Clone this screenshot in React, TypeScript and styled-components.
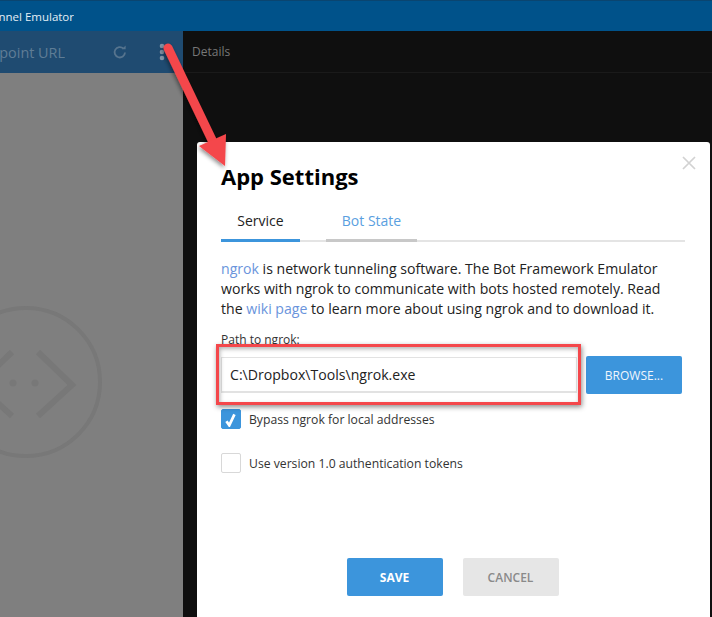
import React from 'react';
import styled, { createGlobalStyle } from 'styled-components';

const GlobalStyle = createGlobalStyle`
  html, body {
    margin: 0;
    padding: 0;
    background: #0f0f0f;
  }
  * {
    box-sizing: border-box;
  }
`;

const FONT = `'Open Sans', 'Noto Sans', 'Liberation Sans', sans-serif`;

const Page = styled.div`
  position: relative;
  width: 712px;
  height: 617px;
  overflow: hidden;
  display: flex;
  flex-direction: column;
  font-family: ${FONT};
  background: #0f0f0f;
`;

const TitleBar = styled.div`
  height: 31px;
  flex-shrink: 0;
  background: #00528a;
  border-top: 1px solid #0a4570;
  display: flex;
`;

const TitleClip = styled.div`
  width: 74px;
  overflow: hidden;
  display: flex;
  justify-content: flex-end;
  align-items: center;
  white-space: nowrap;
  color: #e4eef5;
  font-size: 11.5px;
`;

const Body = styled.div`
  flex: 1;
  display: flex;
  min-height: 0;
`;

const LeftPanel = styled.div`
  width: 183px;
  flex-shrink: 0;
  background: #7f7f7f;
  display: flex;
  flex-direction: column;
`;

const EndpointBar = styled.div`
  height: 42px;
  background: #1f4b71;
  display: flex;
  align-items: center;
`;

const EndpointClip = styled.div`
  width: 65px;
  overflow: hidden;
  display: flex;
  justify-content: flex-end;
  white-space: nowrap;
  color: #5f7d96;
  font-size: 14.4px;
`;

const RefreshIcon = styled.svg`
  width: 16px;
  height: 16px;
  margin-left: 47px;
  color: #56748e;
`;

const DotsIcon = styled.svg`
  width: 6px;
  height: 18px;
  margin-left: 31px;
  color: #8195a8;
`;

const LogoWrap = styled.div`
  margin-top: 229px;
  height: 160px;
  display: flex;
`;

const RightPanel = styled.div`
  flex: 1;
  display: flex;
  flex-direction: column;
`;

const DetailsBar = styled.div`
  height: 42px;
  border-bottom: 1px solid #1a1a1a;
  padding: 0 9px;
  display: flex;
  align-items: center;
  color: #777;
  font-size: 12px;
  background: #0f0f0f;
`;

const Modal = styled.div`
  position: absolute;
  left: 197px;
  top: 142px;
  width: 513px;
  height: 490px;
  background: #fff;
  border-radius: 3px;
  padding: 19px 25px 0 24px;
  display: flex;
  flex-direction: column;
  color: #000;
`;

const CloseIcon = styled.svg`
  position: absolute;
  top: 14px;
  right: 14px;
  width: 14px;
  height: 14px;
  color: #d2d2d2;
`;

const Title = styled.h1`
  margin: 0;
  font-size: 22px;
  line-height: 30px;
  font-weight: 700;
  color: #000;
`;

const TabList = styled.div`
  margin-top: 15px;
  height: 36px;
  display: flex;
  gap: 26px;
  border-bottom: 2px solid #e4e4e4;
`;

const Tab = styled.div<{ $active?: boolean }>`
  width: ${(p) => (p.$active ? 79 : 91)}px;
  height: 36px;
  display: flex;
  justify-content: center;
  padding-top: 5px;
  font-size: 14px;
  line-height: 20px;
  color: ${(p) => (p.$active ? '#222' : '#5a9fe0')};
  border-bottom: 3px solid ${(p) => (p.$active ? '#3c95dc' : '#c8c8c8')};
`;

const Paragraph = styled.p`
  margin: 17px 0 0;
  max-width: 450px;
  font-size: 14.1px;
  line-height: 20px;
  color: #222;
`;

const TextLink = styled.span`
  color: #6a94dc;
`;

const FieldLabel = styled.div`
  margin-top: 13px;
  font-size: 12px;
  line-height: 16px;
  color: #333;
`;

const PathRow = styled.div`
  margin-top: 8px;
  display: flex;
  align-items: center;
  gap: 9px;
`;

const PathInput = styled.div`
  width: 356px;
  height: 36px;
  border: 1px solid #e2e2e2;
  border-bottom-width: 2px;
  padding-left: 8px;
  display: flex;
  align-items: center;
  font-size: 14.1px;
  color: #222;
`;

const BrowseButton = styled.div`
  width: 96px;
  height: 38px;
  background: #3c95dc;
  border-radius: 2px;
  display: flex;
  align-items: center;
  justify-content: center;
  color: #f0f6fc;
  font-size: 12px;
`;

const CheckRow = styled.div<{ $gap: number }>`
  margin-top: ${(p) => p.$gap}px;
  display: flex;
  align-items: center;
  gap: 8px;
  font-size: 12.2px;
  color: #333;
`;

const CheckBox = styled.div<{ $checked?: boolean }>`
  width: 20px;
  height: 20px;
  border-radius: 2px;
  display: flex;
  align-items: center;
  justify-content: center;
  background: ${(p) => (p.$checked ? '#3c95dc' : '#fff')};
  border: 1px solid ${(p) => (p.$checked ? '#3c95dc' : '#d8d8d8')};
`;

const Footer = styled.div`
  margin-top: 85px;
  display: flex;
  justify-content: center;
  gap: 20px;
  padding-right: 1px;
`;

const FooterButton = styled.div<{ $primary?: boolean }>`
  width: 96px;
  height: 38px;
  border-radius: 2px;
  display: flex;
  align-items: center;
  justify-content: center;
  font-size: 12px;
  font-weight: ${(p) => (p.$primary ? 700 : 600)};
  background: ${(p) => (p.$primary ? '#3c95dc' : '#e6e6e6')};
  color: ${(p) => (p.$primary ? '#fff' : '#8a8a8a')};
`;

const Highlight = styled.div`
  position: absolute;
  left: 216px;
  top: 344px;
  width: 365px;
  height: 61px;
  border: 3px solid #f4474b;
  box-shadow: 1px 2px 5px rgba(0, 0, 0, 0.45), inset 1px 2px 4px rgba(0, 0, 0, 0.3);
  pointer-events: none;
`;

const ArrowOverlay = styled.svg`
  position: absolute;
  left: 150px;
  top: 30px;
  width: 90px;
  height: 150px;
  overflow: visible;
  pointer-events: none;
`;

export default function App() {
  return (
    <Page>
      <GlobalStyle />
      <TitleBar>
        <TitleClip>Bot Framework Channel Emulator</TitleClip>
      </TitleBar>
      <Body>
        <LeftPanel>
          <EndpointBar>
            <EndpointClip>Endpoint URL</EndpointClip>
            <RefreshIcon viewBox="0 0 16 16" fill="none" stroke="currentColor" strokeWidth="1.8">
              <path d="M13 8.5a5.2 5.2 0 1 1-1.6-4" />
              <path d="M13.6 1.6v3.6H10" fill="currentColor" stroke="none" />
            </RefreshIcon>
            <DotsIcon viewBox="0 0 6 18" fill="currentColor">
              <circle cx="3" cy="3" r="2.3" />
              <circle cx="3" cy="9" r="2.3" />
              <circle cx="3" cy="15" r="2.3" />
            </DotsIcon>
          </EndpointBar>
          <LogoWrap>
            <svg width="110" height="160" viewBox="0 0 110 160" fill="none" stroke="#787878" strokeWidth="4">
              <circle cx="26" cy="80" r="74" />
              <path d="M38 50l34 33-34 31" strokeWidth="6" />
              <path d="M12 50l-34 33 34 31" strokeWidth="6" />
              <circle cx="13" cy="81" r="3.5" fill="#787878" stroke="none" />
              <circle cx="35" cy="81" r="3.5" fill="#787878" stroke="none" />
            </svg>
          </LogoWrap>
        </LeftPanel>
        <RightPanel>
          <DetailsBar>Details</DetailsBar>
        </RightPanel>
      </Body>
      <Modal>
        <CloseIcon viewBox="0 0 14 14" stroke="currentColor" strokeWidth="1.7">
          <path d="M1 1l12 12M13 1L1 13" />
        </CloseIcon>
        <Title>App Settings</Title>
        <TabList>
          <Tab $active>Service</Tab>
          <Tab>Bot State</Tab>
        </TabList>
        <Paragraph>
          <TextLink>ngrok</TextLink> is network tunneling software. The Bot Framework Emulator works
          with ngrok to communicate with bots hosted remotely. Read the{' '}
          <TextLink>wiki page</TextLink> to learn more about using ngrok and to download it.
        </Paragraph>
        <FieldLabel>Path to ngrok:</FieldLabel>
        <PathRow>
          <PathInput>C:\Dropbox\Tools\ngrok.exe</PathInput>
          <BrowseButton>BROWSE...</BrowseButton>
        </PathRow>
        <CheckRow $gap={15}>
          <CheckBox $checked>
            <svg width="16" height="16" viewBox="0 0 14 14" fill="none" stroke="#fff" strokeWidth="2.4">
              <path d="M3 9l2.5 3.5L10 3" />
            </svg>
          </CheckBox>
          Bypass ngrok for local addresses
        </CheckRow>
        <CheckRow $gap={24}>
          <CheckBox />
          Use version 1.0 authentication tokens
        </CheckRow>
        <Footer>
          <FooterButton $primary>SAVE</FooterButton>
          <FooterButton>CANCEL</FooterButton>
        </Footer>
      </Modal>
      <Highlight />
      <ArrowOverlay viewBox="0 0 90 150">
        <defs>
          <filter id="arrowShadow" x="-30%" y="-30%" width="160%" height="160%">
            <feDropShadow dx="-1" dy="2" stdDeviation="2" floodColor="#000" floodOpacity="0.45" />
          </filter>
        </defs>
        <g filter="url(#arrowShadow)" fill="#f4474b">
          <path d="M18 18L62 110" stroke="#f4474b" strokeWidth="9" strokeLinecap="round" />
          <path d="M49 116L76 104L75 136Z" />
        </g>
      </ArrowOverlay>
    </Page>
  );
}
